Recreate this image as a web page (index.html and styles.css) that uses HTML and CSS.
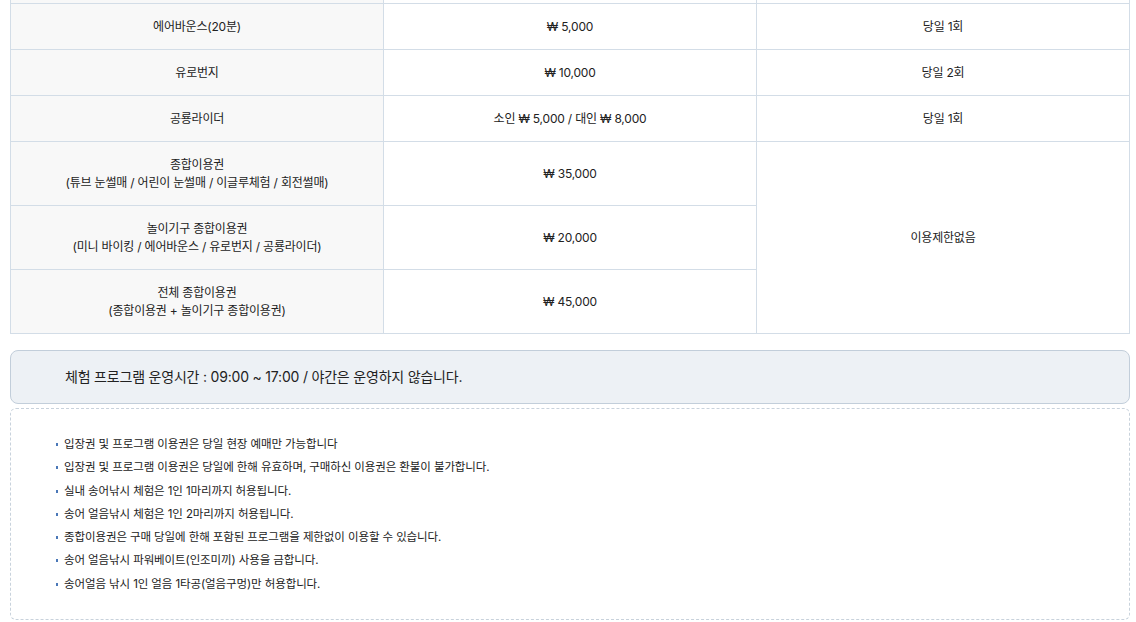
FILE: index.html
```html
<!DOCTYPE html>
<html lang="ko">
<head>
<meta charset="utf-8">
<link rel="stylesheet" href="styles.css">
</head>
<body>
<div class="page">
  <table class="price">
    <colgroup><col class="c1"><col class="c2"><col class="c3"></colgroup>
    <tbody>
      <tr class="r"><th></th><td></td><td></td></tr>
      <tr class="r"><th>에어바운스(20분)</th><td>₩ 5,000</td><td>당일 1회</td></tr>
      <tr class="r"><th>유로번지</th><td>₩ 10,000</td><td>당일 2회</td></tr>
      <tr class="r"><th>공룡라이더</th><td>소인 ₩ 5,000 / 대인 ₩ 8,000</td><td>당일 1회</td></tr>
      <tr class="t"><th>종합이용권<br>(튜브 눈썰매 / 어린이 눈썰매 / 이글루체험 / 회전썰매)</th><td>₩ 35,000</td><td rowspan="3">이용제한없음</td></tr>
      <tr class="t"><th>놀이기구 종합이용권<br>(미니 바이킹 / 에어바운스 / 유로번지 / 공룡라이더)</th><td>₩ 20,000</td></tr>
      <tr class="t"><th>전체 종합이용권<br>(종합이용권 + 놀이기구 종합이용권)</th><td>₩ 45,000</td></tr>
    </tbody>
  </table>

  <div class="notice">체험 프로그램 운영시간 : 09:00 ~ 17:00 / 야간은 운영하지 않습니다.</div>

  <div class="rules">
    <ul>
      <li>입장권 및 프로그램 이용권은 당일 현장 예매만 가능합니다</li>
      <li>입장권 및 프로그램 이용권은 당일에 한해 유효하며, 구매하신 이용권은 환불이 불가합니다.</li>
      <li>실내 송어낚시 체험은 1인 1마리까지 허용됩니다.</li>
      <li>송어 얼음낚시 체험은 1인 2마리까지 허용됩니다.</li>
      <li>종합이용권은 구매 당일에 한해 포함된 프로그램을 제한없이 이용할 수 있습니다.</li>
      <li>송어 얼음낚시 파워베이트(인조미끼) 사용을 금합니다.</li>
      <li>송어얼음 낚시 1인 얼음 1타공(얼음구멍)만 허용합니다.</li>
    </ul>
  </div>
</div>
</body>
</html>
```
FILE: styles.css
```css
html {
  overflow-y: scroll;
}
html::-webkit-scrollbar {
  width: 6px;
}
html::-webkit-scrollbar-track {
  background: #f1f1f1;
}
html::-webkit-scrollbar-thumb {
  background: #f1f1f1;
}
body {
  margin: 0;
  font-family: Inter, "Noto Sans CJK KR", sans-serif;
  color: #222;
  background: #fff;
  overflow: hidden;
}
.page {
  width: 1120px;
  margin: -43px 0 0 10px;
}
.price {
  width: 1120px;
  border-collapse: collapse;
  table-layout: fixed;
  font-size: 12px;
  letter-spacing: -0.2px;
}
.price .c1, .price .c2, .price .c3 {
  width: 373px;
}
.price th, .price td {
  border: 1px solid #d3dde7;
  text-align: center;
  vertical-align: middle;
  font-weight: 400;
  padding: 0 8px;
  line-height: 18px;
  color: #222;
}
.price th {
  background: #f8f8f8;
}
.price td {
  background: #fff;
}
.price tr.r {
  height: 46px;
}
.price tr.t {
  height: 64px;
}
.notice {
  margin-top: 16px;
  display: flex;
  align-items: center;
  padding-left: 54px;
  padding-bottom: 3px;
  box-sizing: border-box;
  height: 54px;
  background: #edf1f5;
  border: 1px solid #c2ceda;
  border-radius: 8px;
  font-size: 14px;
  letter-spacing: -0.2px;
  color: #222;
}
.rules {
  margin-top: 4px;
  height: 210px;
  border: 1px dashed #c8d2dc;
  border-radius: 6px;
}
.rules ul {
  list-style: none;
  margin: 0;
  padding: 24px 0 0 42px;
}
.rules li {
  position: relative;
  padding-left: 11px;
  font-size: 11.5px;
  letter-spacing: -0.1px;
  line-height: 23.3px;
  color: #222;
}
.rules li::before {
  content: "";
  position: absolute;
  left: 3px;
  top: 10px;
  width: 2px;
  height: 3px;
  background: #4a78b8;
}
```
